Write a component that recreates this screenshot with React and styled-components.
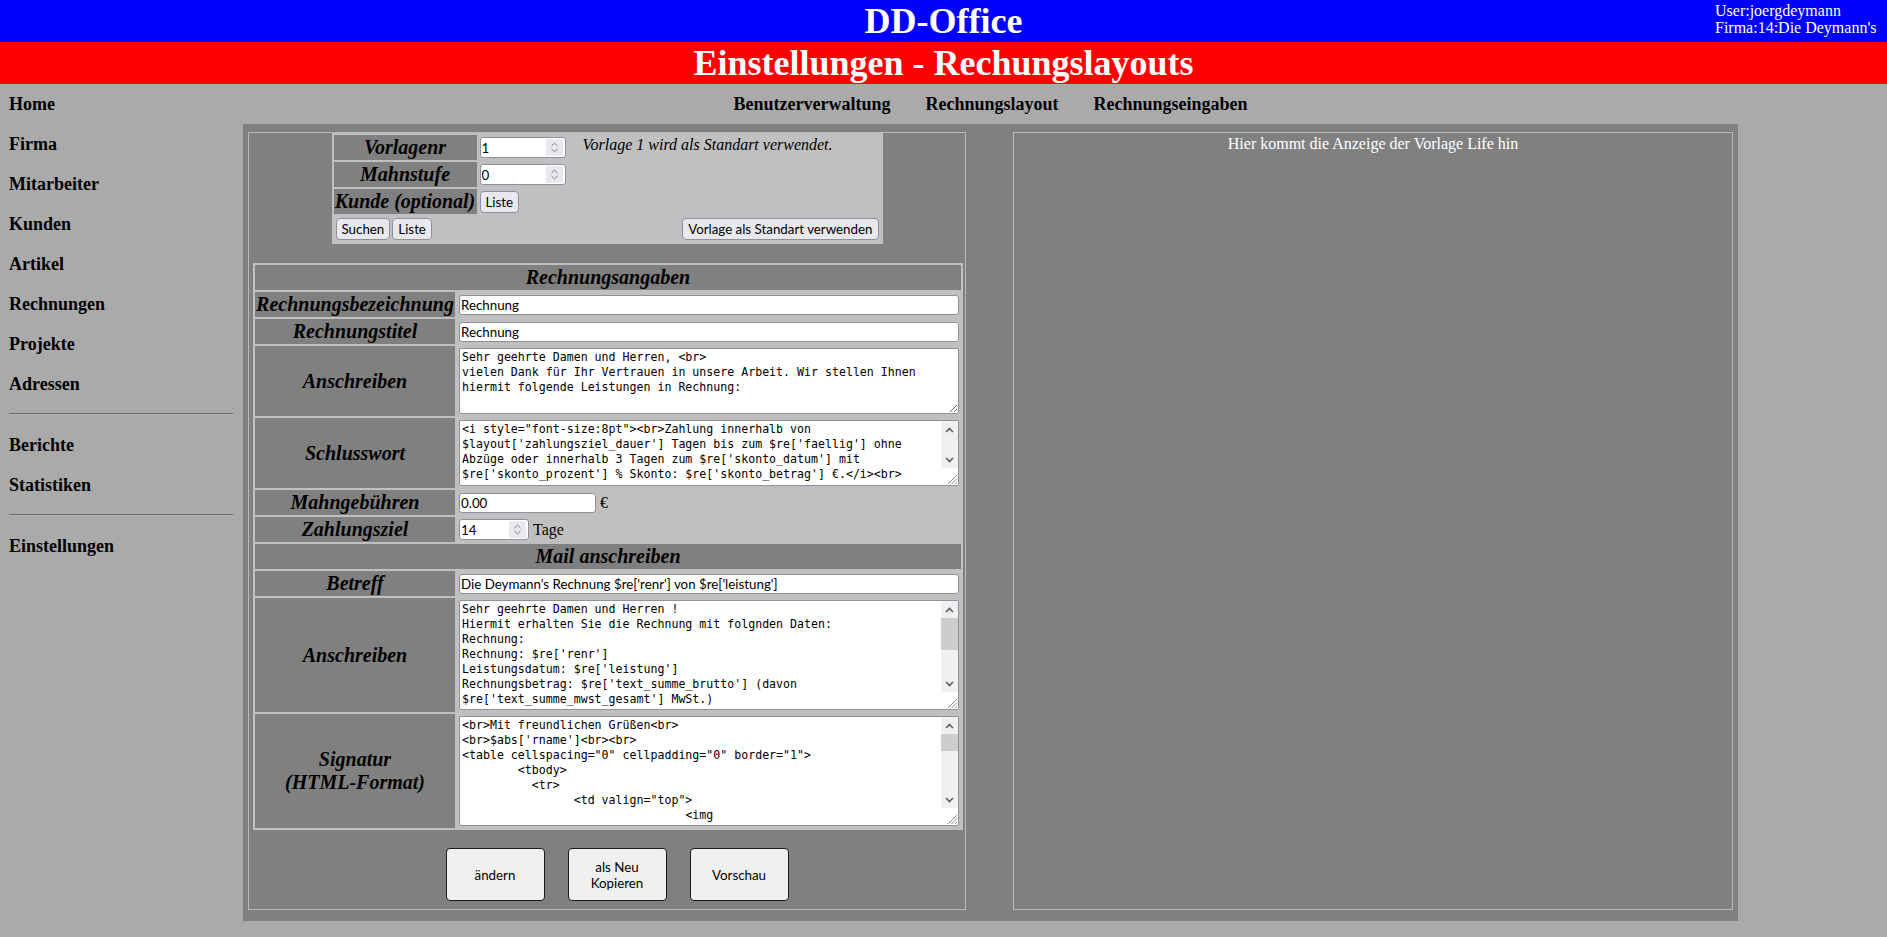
import React from "react";
import styled, { createGlobalStyle } from "styled-components";

const GlobalStyle = createGlobalStyle`
  html, body {
    margin: 0;
    padding: 0;
  }
  body {
    background: #aaaaaa;
    font-family: "Liberation Serif", "Times New Roman", serif;
    color: #000;
  }
`;

const TitleBar = styled.header`
  position: relative;
  height: 42px;
  background: ${(p) => p.$bg};
  color: #fff;
  font-size: 36px;
  font-weight: bold;
  line-height: 42px;
  text-align: center;
`;

const UserInfo = styled.div`
  position: absolute;
  top: 2px;
  left: 1715px;
  font-size: 16px;
  font-weight: normal;
  line-height: 17px;
  text-align: left;
  white-space: nowrap;
`;

const Layout = styled.div`
  display: grid;
  grid-template-columns: 243px 1495px;
  align-items: start;
`;

const SideNav = styled.nav`
  display: flex;
  flex-direction: column;
  padding-left: 9px;
  width: 224px;
`;

const SideLink = styled.a`
  display: block;
  font-size: 18px;
  font-weight: bold;
  line-height: 40px;
  color: #000;
  text-decoration: none;
`;

const SideRule = styled.hr`
  width: 100%;
  margin: 9px 0 10px;
  border: 0;
  border-top: 1px solid #6a6a6a;
  border-bottom: 1px solid #b4b4b4;
`;

const Main = styled.main`
  display: flex;
  flex-direction: column;
`;

const TopNav = styled.nav`
  height: 40px;
  display: flex;
  justify-content: center;
  align-items: center;
  gap: 35px;
`;

const TopLink = styled.a`
  font-size: 18px;
  font-weight: bold;
  color: #000;
  text-decoration: none;
`;

const Panel = styled.div`
  background: #808080;
  padding: 8px 5px 11px;
  display: grid;
  grid-template-columns: 718px 720px;
  column-gap: 47px;
`;

const FormBox = styled.div`
  border: 1px solid #b8b8b8;
  display: flex;
  flex-direction: column;
  align-items: center;
  padding-bottom: 8px;
`;

const PreviewBox = styled.div`
  border: 1px solid #b8b8b8;
  color: #fff;
  font-size: 16px;
  line-height: 18px;
  text-align: center;
  padding-top: 2px;
`;

const Table = styled.table`
  table-layout: fixed;
  width: ${(p) => p.$w}px;
  border-spacing: 2px;
  background: #c0c0c0;
  margin-top: ${(p) => p.$mt || 0}px;
  align-self: ${(p) => (p.$left ? "flex-start" : "center")};
  margin-left: ${(p) => (p.$left ? "4px" : "0")};
`;

const Col = styled.col`
  width: ${(p) => p.$w}px;
`;

const Label = styled.th`
  background: #808080;
  font-size: 20px;
  font-weight: bold;
  font-style: italic;
  line-height: 23px;
  padding: 1px;
  text-align: center;
  vertical-align: middle;
  white-space: nowrap;
`;

const Cell = styled.td`
  padding: ${(p) => (p.$pad ? "2px" : "1px")};
  vertical-align: ${(p) => (p.$top ? "top" : "middle")};
  text-align: ${(p) => (p.$right ? "right" : "left")};
  font-size: 16px;
  line-height: 18px;
  white-space: nowrap;
`;

const Note = styled.i`
  font-size: 16px;
`;

const Row = styled.div`
  display: flex;
  gap: 2px;
`;

const TextInput = styled.input`
  box-sizing: border-box;
  width: ${(p) => (p.$w ? `${p.$w}px` : "100%")};
  height: 20px;
  border: 1px solid #8f8f9d;
  border-radius: 3px;
  padding: 0 1px;
  margin: 0;
  background: #fff;
  font-family: Lato, "Liberation Sans", sans-serif;
  font-size: 13.33px;
  color: #000;
  vertical-align: middle;
`;

const NumberWrap = styled.span`
  box-sizing: border-box;
  display: inline-flex;
  align-items: center;
  width: ${(p) => p.$w}px;
  height: 21px;
  border: 1px solid #8f8f9d;
  border-radius: 3px;
  background: #fff;
  vertical-align: middle;
`;

const NumberInput = styled.input`
  flex: 1;
  min-width: 0;
  height: 100%;
  border: 0;
  padding: 0 1px;
  margin: 0;
  background: transparent;
  font-family: Lato, "Liberation Sans", sans-serif;
  font-size: 13.33px;
  color: #000;
  outline: none;
`;

const Spinner = styled.span`
  width: 17px;
  height: 17px;
  margin-right: 2px;
  background: #e9e9ed;
  display: flex;
  align-items: center;
  justify-content: center;
`;

const SmallButton = styled.button`
  height: 22px;
  padding: 0 5px;
  border: 1px solid #8f8f9d;
  border-radius: 4px;
  background: #e9e9ed;
  font-family: Lato, "Liberation Sans", sans-serif;
  font-size: 13.33px;
  color: #000;
`;

const TextArea = styled.textarea`
  display: block;
  box-sizing: border-box;
  width: 100%;
  height: ${(p) => p.$h}px;
  margin: 0;
  padding: 1px 2px;
  border: 1px solid #8f8f9d;
  border-radius: 2px;
  background: #fff;
  font-family: "DejaVu Sans Mono", "Liberation Mono", monospace;
  font-size: 11.6px;
  line-height: 15px;
  color: #000;
`;

const AreaFrame = styled.div`
  box-sizing: border-box;
  display: flex;
  width: 100%;
  height: ${(p) => p.$h}px;
  border: 1px solid #8f8f9d;
  border-radius: 2px;
  background: #fff;
`;

const AreaText = styled.textarea`
  flex: 1;
  min-width: 0;
  margin: 0;
  padding: 1px 2px;
  border: 0;
  background: transparent;
  resize: none;
  overflow: hidden;
  outline: none;
  font-family: "DejaVu Sans Mono", "Liberation Mono", monospace;
  font-size: 11.6px;
  line-height: 15px;
  color: #000;
`;

const ScrollBar = styled.div`
  width: 17px;
  display: flex;
  flex-direction: column;
`;

const ScrollArrow = styled.div`
  height: 17px;
  flex-shrink: 0;
  display: flex;
  align-items: center;
  justify-content: center;
  background: #f0f0f0;
`;

const ScrollTrack = styled.div`
  flex: 1;
  background: #f0f0f0;
`;

const ScrollThumb = styled.div`
  height: ${(p) => p.$h}px;
  background: #cdcdcd;
`;

const Grip = styled.div`
  height: 17px;
  flex-shrink: 0;
  display: flex;
  align-items: flex-end;
  justify-content: flex-end;
`;

const Unit = styled.span`
  font-size: 16px;
  margin-left: 4px;
  vertical-align: middle;
`;

const ActionBar = styled.div`
  display: flex;
  justify-content: center;
  gap: 23px;
  margin-top: 18px;
  padding-left: 20px;
  align-self: stretch;
`;

const BigButton = styled.button`
  width: 99px;
  height: 53px;
  border: 1px solid #1a1a1a;
  border-radius: 4px;
  background: #f0f0f0;
  font-family: Lato, "Liberation Sans", sans-serif;
  font-size: 13.33px;
  line-height: 16px;
  color: #000;
  padding: 0 4px;
`;

function SpinIcon() {
  return (
    <Spinner>
      <svg width="17" height="17" viewBox="0 0 17 17" fill="none">
        <path d="M5.5 7 L8.5 4.2 L11.5 7" stroke="#7c7c84" strokeWidth="1" />
        <path d="M5.5 10 L8.5 12.8 L11.5 10" stroke="#7c7c84" strokeWidth="1" />
      </svg>
    </Spinner>
  );
}

function NumberField({ value, width }) {
  return (
    <NumberWrap $w={width}>
      <NumberInput type="text" defaultValue={value} />
      <SpinIcon />
    </NumberWrap>
  );
}

function ScrollArea({ value, height, thumb }) {
  return (
    <AreaFrame $h={height}>
      <AreaText defaultValue={value} />
      <ScrollBar>
        <ScrollArrow>
          <svg width="9" height="6" viewBox="0 0 9 6" fill="none">
            <path d="M1 5 L4.5 1.5 L8 5" stroke="#606060" strokeWidth="1.7" />
          </svg>
        </ScrollArrow>
        <ScrollTrack>{thumb > 0 && <ScrollThumb $h={thumb} />}</ScrollTrack>
        <ScrollArrow>
          <svg width="9" height="6" viewBox="0 0 9 6" fill="none">
            <path d="M1 1 L4.5 4.5 L8 1" stroke="#606060" strokeWidth="1.7" />
          </svg>
        </ScrollArrow>
        <Grip>
          <svg width="12" height="12" viewBox="0 0 12 12" fill="none">
            <path d="M11 2 L2 11 M11 5.5 L5.5 11 M11 9 L9 11" stroke="#8a8a8a" strokeWidth="1" />
          </svg>
        </Grip>
      </ScrollBar>
    </AreaFrame>
  );
}

const sideItems = ["Home", "Firma", "Mitarbeiter", "Kunden", "Artikel", "Rechnungen", "Projekte", "Adressen"];

const anschreiben =
  "Sehr geehrte Damen und Herren, <br>\nvielen Dank für Ihr Vertrauen in unsere Arbeit. Wir stellen Ihnen hiermit folgende Leistungen in Rechnung:";

const schlusswort =
  "<i style=\"font-size:8pt\"><br>Zahlung innerhalb von $layout['zahlungsziel_dauer'] Tagen bis zum $re['faellig'] ohne Abzüge oder innerhalb 3 Tagen zum $re['skonto_datum'] mit $re['skonto_prozent'] % Skonto: $re['skonto_betrag'] €.</i><br>\n";

const mailText = [
  "Sehr geehrte Damen und Herren !",
  "Hiermit erhalten Sie die Rechnung mit folgnden Daten:",
  "Rechnung:",
  "Rechnung: $re['renr']",
  "Leistungsdatum: $re['leistung']",
  "Rechnungsbetrag: $re['text_summe_brutto'] (davon $re['text_summe_mwst_gesamt'] MwSt.)",
  "Zahlbar bis: $re['faellig']",
  "",
  "Die Rechnung finden Sie im Anhang.",
  "",
  "Mit freundlichen Grüßen",
  "$abs['rname']",
  "",
].join("\n");

const signatur = [
  "<br>Mit freundlichen Grüßen<br>",
  "<br>$abs['rname']<br><br>",
  "<table cellspacing=\"0\" cellpadding=\"0\" border=\"1\">",
  "        <tbody>",
  "          <tr>",
  "                <td valign=\"top\">",
  "                                <img",
  "                                src=\"logo.png\" width=\"120\">",
  "                </td>",
  "          </tr>",
  "        </tbody>",
  "</table>",
].join("\n");

export default function App() {
  return (
    <>
      <GlobalStyle />
      <TitleBar $bg="#0000ff">
        DD-Office
        <UserInfo>
          User:joergdeymann
          <br />
          Firma:14:Die Deymann's
        </UserInfo>
      </TitleBar>
      <TitleBar $bg="#ff0000">Einstellungen - Rechungslayouts</TitleBar>

      <Layout>
        <SideNav>
          {sideItems.map((item) => (
            <SideLink key={item} href="#">
              {item}
            </SideLink>
          ))}
          <SideRule />
          <SideLink href="#">Berichte</SideLink>
          <SideLink href="#">Statistiken</SideLink>
          <SideRule />
          <SideLink href="#">Einstellungen</SideLink>
        </SideNav>

        <Main>
          <TopNav>
            <TopLink href="#">Benutzerverwaltung</TopLink>
            <TopLink href="#">Rechnungslayout</TopLink>
            <TopLink href="#">Rechnungseingaben</TopLink>
          </TopNav>

          <Panel>
            <FormBox>
              <Table $w={551}>
                <colgroup>
                  <Col $w={143} />
                  <Col $w={101} />
                  <Col $w={299} />
                </colgroup>
                <tbody>
                  <tr>
                    <Label>Vorlagenr</Label>
                    <Cell>
                      <NumberField value="1" width={86} />
                    </Cell>
                    <Cell $top>
                      <Note>Vorlage 1 wird als Standart verwendet.</Note>
                    </Cell>
                  </tr>
                  <tr>
                    <Label>Mahnstufe</Label>
                    <Cell>
                      <NumberField value="0" width={86} />
                    </Cell>
                    <Cell />
                  </tr>
                  <tr>
                    <Label>Kunde (optional)</Label>
                    <Cell>
                      <SmallButton>Liste</SmallButton>
                    </Cell>
                    <Cell />
                  </tr>
                  <tr>
                    <Cell $pad>
                      <Row>
                        <SmallButton>Suchen</SmallButton>
                        <SmallButton>Liste</SmallButton>
                      </Row>
                    </Cell>
                    <Cell />
                    <Cell $pad $right>
                      <SmallButton>Vorlage als Standart verwenden</SmallButton>
                    </Cell>
                  </tr>
                </tbody>
              </Table>

              <Table $w={710} $mt={19} $left>
                <colgroup>
                  <Col $w={200} />
                  <Col $w={504} />
                </colgroup>
                <tbody>
                  <tr>
                    <Label colSpan={2}>Rechnungsangaben</Label>
                  </tr>
                  <tr>
                    <Label>Rechnungsbezeichnung</Label>
                    <Cell $pad>
                      <TextInput defaultValue="Rechnung" />
                    </Cell>
                  </tr>
                  <tr>
                    <Label>Rechnungstitel</Label>
                    <Cell $pad>
                      <TextInput defaultValue="Rechnung" />
                    </Cell>
                  </tr>
                  <tr>
                    <Label>Anschreiben</Label>
                    <Cell $pad>
                      <TextArea $h={66} defaultValue={anschreiben} />
                    </Cell>
                  </tr>
                  <tr>
                    <Label>Schlusswort</Label>
                    <Cell $pad>
                      <ScrollArea height={66} thumb={0} value={schlusswort} />
                    </Cell>
                  </tr>
                  <tr>
                    <Label>Mahngebühren</Label>
                    <Cell $pad>
                      <TextInput $w={137} defaultValue="0.00" />
                      <Unit>€</Unit>
                    </Cell>
                  </tr>
                  <tr>
                    <Label>Zahlungsziel</Label>
                    <Cell $pad>
                      <NumberField value="14" width={70} />
                      <Unit>Tage</Unit>
                    </Cell>
                  </tr>
                  <tr>
                    <Label colSpan={2}>Mail anschreiben</Label>
                  </tr>
                  <tr>
                    <Label>Betreff</Label>
                    <Cell $pad>
                      <TextInput defaultValue="Die Deymann's Rechnung $re['renr'] von $re['leistung']" />
                    </Cell>
                  </tr>
                  <tr>
                    <Label>Anschreiben</Label>
                    <Cell $pad>
                      <ScrollArea height={110} thumb={32} value={mailText} />
                    </Cell>
                  </tr>
                  <tr>
                    <Label>
                      Signatur
                      <br />
                      (HTML-Format)
                    </Label>
                    <Cell $pad>
                      <ScrollArea height={110} thumb={17} value={signatur} />
                    </Cell>
                  </tr>
                </tbody>
              </Table>

              <ActionBar>
                <BigButton>ändern</BigButton>
                <BigButton>
                  als Neu
                  <br />
                  Kopieren
                </BigButton>
                <BigButton>Vorschau</BigButton>
              </ActionBar>
            </FormBox>

            <PreviewBox>Hier kommt die Anzeige der Vorlage Life hin</PreviewBox>
          </Panel>
        </Main>
      </Layout>
    </>
  );
}
